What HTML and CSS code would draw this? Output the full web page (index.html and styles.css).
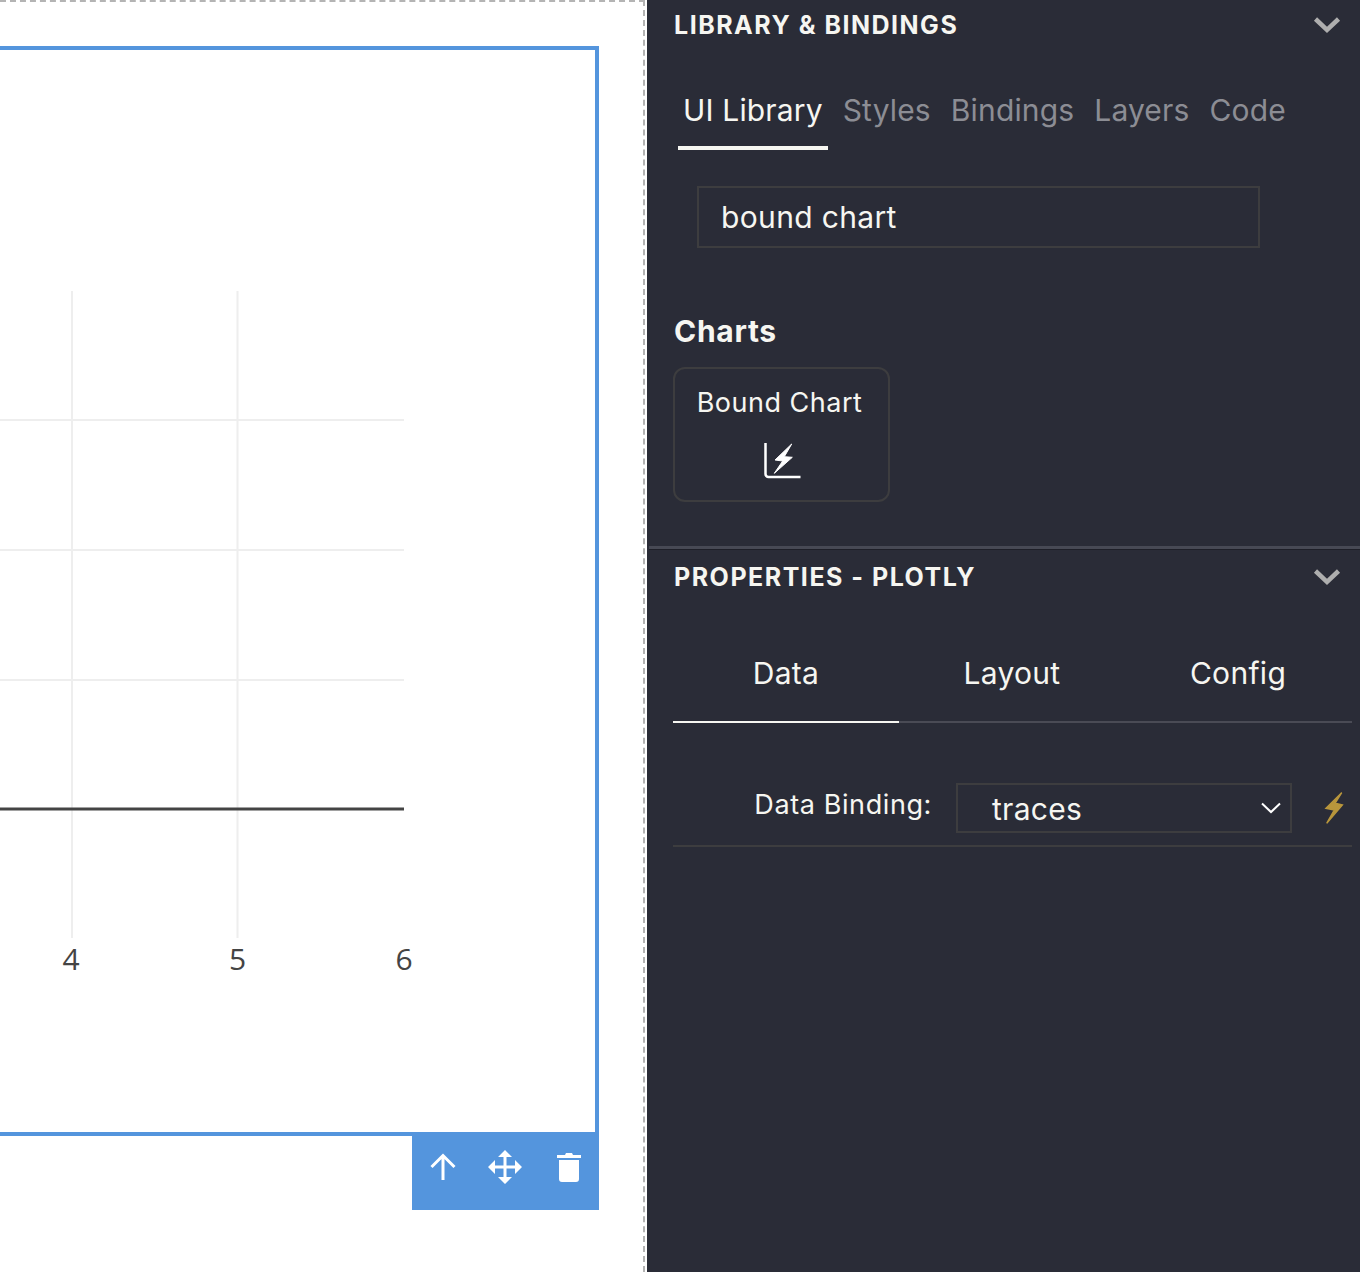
FILE: index.html
```html
<!DOCTYPE html>
<html lang="en">
<head>
    <meta charset="UTF-8">
    <title>Designer</title>
    <link rel="stylesheet" href="styles.css">
</head>
<body>
<div class="app">
    <div class="canvas">
        <div class="frame">
            <svg class="chart" width="420" height="720" viewBox="0 0 420 720">
                <g class="grid">
                    <line x1="72" y1="0" x2="72" y2="647"></line>
                    <line x1="237.5" y1="0" x2="237.5" y2="647"></line>
                    <line x1="0" y1="129" x2="404" y2="129"></line>
                    <line x1="0" y1="259" x2="404" y2="259"></line>
                    <line x1="0" y1="389" x2="404" y2="389"></line>
                </g>
                <line class="zero" x1="0" y1="518" x2="404" y2="518"></line>
                <g class="ticks">
                    <text x="71" y="679">4</text>
                    <text x="237.5" y="679">5</text>
                    <text x="404" y="679">6</text>
                </g>
            </svg>
        </div>
        <div class="frame-tools">
            <svg width="28" height="28" viewBox="0 0 28 28">
                <path d="M14 27V3M2.500 14 14 2.500 25.500 14" fill="none" stroke="#fff" stroke-width="3"></path>
            </svg>
            <svg class="move-icon" width="34" height="34" viewBox="0 0 34 34">
                <path d="M17 4v26M4 17h26" stroke="#fff" stroke-width="3"></path>
                <path d="M17 0l7 7H10zM17 34l7-7H10zM0 17l7-7v14zM34 17l-7-7v14z" fill="#fff"></path>
            </svg>
            <svg width="24" height="30" viewBox="0 0 24 30">
                <path d="M0 3h8l1-2h6l1 2h8v3H0zM2 8h20v19a3 3 0 0 1-3 3H5a3 3 0 0 1-3-3z" fill="#fff"></path>
            </svg>
        </div>
    </div>

    <div class="panel">
        <div class="section-head">
            <span>LIBRARY &amp; BINDINGS</span>
            <svg class="caret" width="28" height="18" viewBox="0 0 28 18">
                <path d="M2.500 3 14 14 25.500 3" fill="none" stroke="#aeaeae" stroke-width="4.500"></path>
            </svg>
        </div>
        <ul class="tabs">
            <li class="current">UI Library</li>
            <li>Styles</li>
            <li>Bindings</li>
            <li>Layers</li>
            <li>Code</li>
        </ul>
        <div class="search">bound chart</div>
        <h3 class="group-title">Charts</h3>
        <div class="card">
            <div class="card-name">Bound Chart</div>
            <svg width="38" height="38" viewBox="0 0 38 38">
                <path d="M2.500 1v31a3 3 0 0 0 3 3h32" fill="none" stroke="#fff" stroke-width="2.500"></path>
                <path d="M28.700 2 12 18l7.700 1-8.400 12.300 18-16-8-.6z" fill="#fff" stroke="#fff" stroke-width="1"></path>
            </svg>
        </div>

        <div class="divider"></div>

        <div class="section-head props-head">
            <span>PROPERTIES - PLOTLY</span>
            <svg class="caret" width="28" height="18" viewBox="0 0 28 18">
                <path d="M2.500 3 14 14 25.500 3" fill="none" stroke="#aeaeae" stroke-width="4.500"></path>
            </svg>
        </div>
        <ul class="prop-tabs">
            <li class="current">Data</li>
            <li>Layout</li>
            <li>Config</li>
        </ul>
        <div class="prop-row">
            <label class="prop-label">Data Binding:</label>
            <div class="select">
                <span>traces</span>
                <svg width="20" height="12" viewBox="0 0 20 12">
                    <path d="M1 1.500 10 10l9-8.500" fill="none" stroke="#fff" stroke-width="2"></path>
                </svg>
            </div>
            <svg class="bolt" width="20" height="32" viewBox="0 0 20 32">
                <path d="M17.700.7 2 16.300 10.300 18 2.700 31.300 18.300 13 11 11.300z" fill="#b8963c" stroke="#b8963c" stroke-width="1.500"></path>
            </svg>
        </div>
    </div>
</div>
</body>
</html>
```

FILE: styles.css
```css
* {
    padding: 0;
    margin: 0;
    box-sizing: border-box;
}
ul {
    list-style: none;
}
html, body {
    width: 100%;
    height: 100%;
    overflow: hidden;
    background-color: #ffffff;
}
body {
    font-family: Inter, "Liberation Sans", sans-serif;
}
.app {
    display: flex;
    width: 1360px;
    height: 1272px;
}

/* canvas */
.canvas {
    position: relative;
    width: 645px;
    height: 1272px;
    flex-shrink: 0;
    border-top: 2px dashed #b4b4b4;
    border-right: 2px dashed #b4b4b4;
    overflow: hidden;
}
.frame {
    position: absolute;
    left: -20px;
    top: 44px;
    width: 619px;
    height: 1090px;
    border: 4px solid #5495dd;
}
.chart {
    position: absolute;
    left: 16px;
    top: 241px;
}
.grid line {
    stroke: #eeeeee;
    stroke-width: 2;
}
.zero {
    stroke: #444444;
    stroke-width: 3;
}
.ticks text {
    font-family: "Open Sans", sans-serif;
    font-size: 30px;
    fill: #444444;
    text-anchor: middle;
}
.frame-tools {
    position: absolute;
    left: 412px;
    top: 1130px;
    width: 187px;
    height: 78px;
    background-color: #5495dd;
    display: flex;
    align-items: center;
    justify-content: space-between;
    padding: 0 18px 8px 17px;
}
.move-icon {
    margin-right: 4px;
}

/* right panel */
.panel {
    width: 713px;
    margin-left: 2px;
    flex-shrink: 0;
    height: 1272px;
    background-color: #2a2c37;
    color: #f6f6f1;
}
.section-head {
    display: flex;
    justify-content: space-between;
    align-items: center;
    height: 50px;
    padding: 0 19px 0 27px;
    font-size: 25px;
    font-weight: 700;
    letter-spacing: 1.5px;
}
.tabs {
    display: flex;
    padding: 26px 0 0 31px;
    font-size: 30px;
    letter-spacing: 0.15px;
    color: #8c8d94;
}
.tabs li {
    height: 74px;
    line-height: 68px;
    padding: 0 5px;
    margin-right: 10px;
    border-bottom: 4px solid transparent;
}
.tabs li.current {
    color: #f6f6f1;
    border-bottom-color: #f6f6f1;
}
.search {
    width: 563px;
    height: 62px;
    margin: 36px 0 0 50px;
    padding-left: 22px;
    border: 2px solid #3d3d3f;
    font-size: 30px;
    letter-spacing: 0.35px;
    line-height: 58px;
}
.group-title {
    margin: 63px 0 0 27px;
    font-size: 30px;
    line-height: 40px;
    font-weight: 700;
    letter-spacing: 0.7px;
}
.card {
    width: 217px;
    height: 135px;
    margin: 16px 0 0 26px;
    padding-top: 18px;
    border: 2px solid #3d3d3f;
    border-radius: 12px;
    display: flex;
    flex-direction: column;
    align-items: center;
    font-size: 27px;
    letter-spacing: 0.5px;
}
.card-name {
    line-height: 32px;
    margin: 0 4px 23px 0;
}
.divider {
    height: 4px;
    margin: 44px 0 0 2px;
    background-color: #474954;
    border-bottom: 1px solid #1e1f28;
}
.props-head {
    height: 54px;
}
.prop-tabs {
    display: flex;
    width: 679px;
    margin: 0 0 0 26px;
    padding-top: 26px;
    border-bottom: 2px solid #4a4b55;
    font-size: 30px;
    letter-spacing: 0.3px;
}
.prop-tabs li {
    width: 226px;
    height: 93px;
    line-height: 86px;
    text-align: center;
    margin-bottom: -2px;
}
.prop-tabs li.current {
    border-bottom: 2px solid #f6f6f1;
}
.prop-row {
    display: flex;
    align-items: flex-start;
    width: 679px;
    height: 75px;
    margin: 49px 0 0 26px;
    padding-top: 11px;
    border-bottom: 2px solid #3d3d3f;
}
.prop-label {
    width: 259px;
    text-align: right;
    font-size: 27px;
    line-height: 44px;
    letter-spacing: 0.6px;
}
.select {
    display: flex;
    align-items: center;
    justify-content: space-between;
    width: 336px;
    height: 50px;
    margin-left: 24px;
    padding: 0 9px 0 34px;
    border: 2px solid #3d3d3f;
    font-size: 30px;
    letter-spacing: 0.3px;
}
.select span {
    padding-top: 2px;
}
.bolt {
    margin: 9px 0 0 32px;
}
```
